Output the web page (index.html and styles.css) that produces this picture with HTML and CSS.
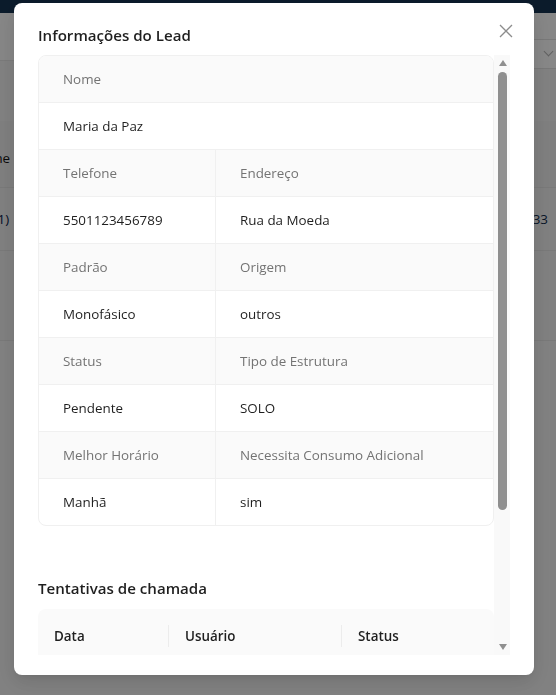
FILE: index.html
```html
<!DOCTYPE html>
<html lang="pt-BR">
<head>
<meta charset="utf-8">
<title>Informações do Lead</title>
<link rel="stylesheet" href="styles.css">
</head>
<body>
<div class="page">
  <header class="topbar"></header>
  <div class="filters">
    <div class="filter-row">
      <div class="select"><span class="chev"></span></div>
    </div>
  </div>
  <div class="list">
    <div class="list-head"><span class="cell-l">Nome</span></div>
    <div class="list-row"><span class="cell-l link">(11)</span><span class="cell-r">33</span></div>
    <div class="list-row tall"></div>
  </div>
</div>
<div class="mask"></div>
<div class="modal-wrap">
  <div class="modal">
    <button class="close" aria-label="Fechar">
      <svg width="14" height="14" viewBox="0 0 14 14"><path d="M1 1 L13 13 M13 1 L1 13" stroke="#8c8c8c" stroke-width="1.3" fill="none"/></svg>
    </button>
    <div class="modal-title">Informações do Lead</div>
    <div class="modal-body">
      <div class="scroll-content">
        <div class="desc">
          <div class="lbl span2">Nome</div>
          <div class="val span2">Maria da Paz</div>
          <div class="lbl first">Telefone</div>
          <div class="lbl">Endereço</div>
          <div class="val first">5501123456789</div>
          <div class="val">Rua da Moeda</div>
          <div class="lbl first">Padrão</div>
          <div class="lbl">Origem</div>
          <div class="val first">Monofásico</div>
          <div class="val">outros</div>
          <div class="lbl first">Status</div>
          <div class="lbl">Tipo de Estrutura</div>
          <div class="val first">Pendente</div>
          <div class="val">SOLO</div>
          <div class="lbl first">Melhor Horário</div>
          <div class="lbl">Necessita Consumo Adicional</div>
          <div class="val first last">Manhã</div>
          <div class="val last">sim</div>
        </div>
        <div class="section-title">Tentativas de chamada</div>
        <div class="calls">
          <div class="calls-head">
            <div class="th sep">Data</div>
            <div class="th sep">Usuário</div>
            <div class="th">Status</div>
          </div>
        </div>
      </div>
      <div class="scrollbar">
        <span class="arrow up"></span>
        <span class="thumb"></span>
        <span class="track-rest"></span>
        <span class="arrow down"></span>
      </div>
    </div>
  </div>
</div>
</body>
</html>
```

FILE: styles.css
```css
* { box-sizing: border-box; }
html, body { margin: 0; padding: 0; }
body {
  width: 556px;
  height: 695px;
  overflow: hidden;
  font-family: "Open Sans", "Noto Sans", sans-serif;
  font-size: 13.4px;
  line-height: 22px;
  color: #1f1f1f;
  background: #ececec;
}

/* background page */
.page { display: flex; flex-direction: column; height: 695px; }
.topbar { height: 13px; background: #15324f; flex: none; }
.filters { height: 48px; background: #f6f6f6; border-bottom: 1px solid #e0e0e0; flex: none; }
.filter-row { display: flex; justify-content: flex-end; padding-top: 26px; }
.select { width: 60px; height: 30px; border-top: 1px solid #dcdcdc; border-bottom: 1px solid #dcdcdc; background: #f8f8f8; display: flex; justify-content: flex-end; padding-right: 4px; }
.chev { width: 7px; height: 7px; border-right: 1px solid #b0b0b0; border-bottom: 1px solid #b0b0b0; transform: rotate(45deg); margin-top: 8px; }
.list { margin-top: 60px; background: #e9e9e9; }
.list-head { height: 67px; border-bottom: 1px solid #dedede; display: flex; align-items: center; padding-top: 8px; }
.list-head .cell-l { margin-left: -28px; color: #111; }
.list-row { height: 63px; border-bottom: 1px solid #dedede; display: flex; align-items: center; justify-content: space-between; background: #ebebeb; }
.list-row .cell-l { margin-left: -14px; color: #0a1a4a; }
.list-row .cell-r { margin-right: 8px; color: #0e2a4a; }
.list-row.tall { height: 90px; }

.mask { position: fixed; inset: 0; background: rgba(0, 0, 0, 0.45); }

/* modal */
.modal-wrap { position: fixed; inset: 0; padding: 3px 22px 0 14px; }
.modal {
  position: relative;
  width: 520px;
  height: 672px;
  background: #fff;
  border-radius: 8px;
  padding: 20px 24px;
  box-shadow: 0 6px 16px rgba(0,0,0,0.08), 0 3px 6px -4px rgba(0,0,0,0.12), 0 9px 28px 8px rgba(0,0,0,0.05);
}
.close {
  position: absolute;
  top: 17px;
  right: 17px;
  width: 22px;
  height: 22px;
  border: 0;
  padding: 0;
  background: transparent;
  display: flex;
  align-items: center;
  justify-content: center;
}
.modal-title { font-size: 15.1px; line-height: 24px; font-weight: 600; margin-bottom: 8px; color: #1f1f1f; }
.modal-body { display: flex; height: 600px; }
.scroll-content { flex: 1; overflow: hidden; }

.scrollbar { width: 16px; flex: none; background: #f9f9f9; display: flex; flex-direction: column; align-items: center; padding: 5px 0 5px 1px; }
.arrow { width: 0; height: 0; border-left: 4.5px solid transparent; border-right: 4.5px solid transparent; flex: none; }
.arrow.up { border-bottom: 6px solid #8f8f8f; }
.arrow.down { border-top: 6px solid #8f8f8f; }
.thumb { width: 9px; height: 438px; border-radius: 5px; background: #8f8f8f; margin-top: 6px; flex: none; }
.track-rest { flex: 1; }

.desc {
  display: grid;
  grid-template-columns: 177px 1fr;
  border: 1px solid #f0f0f0;
  border-radius: 8px;
  overflow: hidden;
}
.lbl, .val { padding: 12px 24px; border-bottom: 1px solid #f0f0f0; }
.lbl { background: #fafafa; color: #737373; }
.val { color: #1f1f1f; }
.first { border-right: 1px solid #f0f0f0; }
.span2 { grid-column: 1 / 3; }
.last { border-bottom: 0; }

.section-title { font-size: 15.1px; line-height: 24px; font-weight: 600; margin-top: 50px; margin-bottom: 9px; }
.calls { border-radius: 8px 8px 0 0; overflow: hidden; }
.calls-head { display: grid; grid-template-columns: 131px 173px 1fr; background: #fafafa; border-bottom: 1px solid #f0f0f0; }
.th { position: relative; padding: 16px; font-weight: 600; color: #1f1f1f; }
.th.sep::after { content: ""; position: absolute; right: 0; top: 50%; width: 1px; height: 22px; margin-top: -11px; background: #ececec; }
```
